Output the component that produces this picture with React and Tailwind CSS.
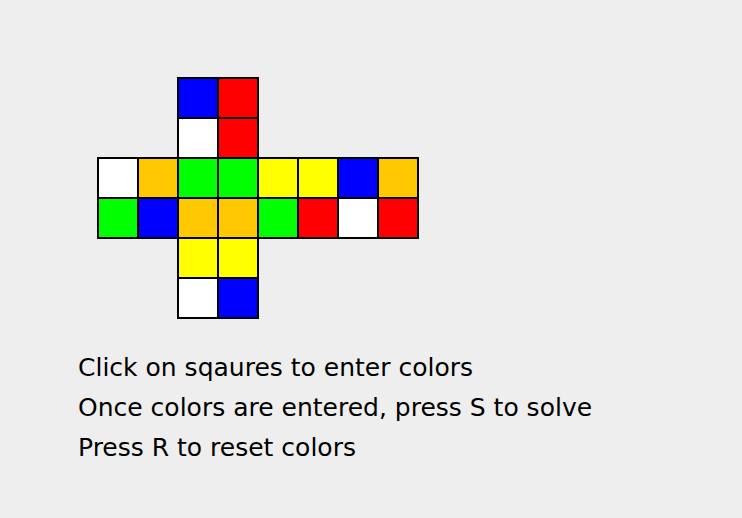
const C = {
  b: 'bg-[#0000ff]',
  r: 'bg-[#ff0000]',
  w: 'bg-white',
  o: 'bg-[#ffc800]',
  g: 'bg-[#00ff00]',
  y: 'bg-[#ffff00]',
}

const rows = [
  '..br....',
  '..wr....',
  'woggyybo',
  'gboogrwr',
  '..yy....',
  '..wb....',
]

export default function App() {
  return (
    <div className="w-full h-[518px] bg-[#eeeeee] pl-[78px] pt-[77px]" style={{ fontFamily: '"DejaVu Sans", sans-serif' }}>
      <div className="ml-[19px] grid grid-cols-[repeat(8,40px)] grid-rows-[repeat(6,40px)]">
        {rows.flatMap((row, ri) =>
          row.split('').map((ch, ci) =>
            ch === '.' ? (
              <div key={`${ri}-${ci}`} />
            ) : (
              <div key={`${ri}-${ci}`} className={`w-[42px] h-[42px] border-2 border-black ${C[ch]}`} />
            )
          )
        )}
      </div>
      <div className="mt-[31px] text-[25px] leading-[40px] text-black">
        <p>Click on sqaures to enter colors</p>
        <p>Once colors are entered, press S to solve</p>
        <p>Press R to reset colors</p>
      </div>
    </div>
  )
}
